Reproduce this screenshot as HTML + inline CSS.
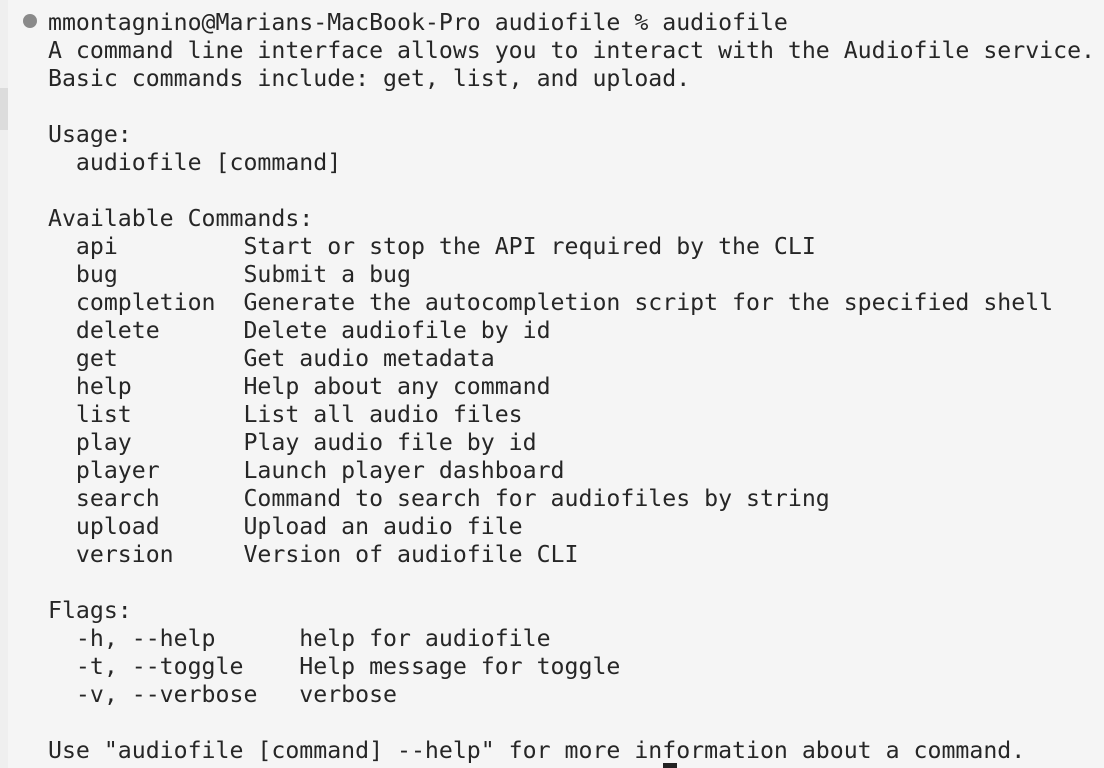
<!DOCTYPE html>
<html><head><meta charset="utf-8"><style>
html,body{margin:0;padding:0;background:#f5f5f5;width:1104px;height:768px;overflow:hidden;position:relative}
pre{position:absolute;left:48px;top:9px;margin:0;font-family:"DejaVu Sans Mono","Liberation Mono",monospace;font-size:23.2px;line-height:28px;color:#262626;white-space:pre}
.dot{position:absolute;left:23px;top:14px;width:14px;height:14px;border-radius:50%;background:#8a8a8a}
.bar{position:absolute;left:0;top:88px;width:8px;height:42px;background:#dcdcdc}
.edge{position:absolute;left:0;top:0;width:8px;height:768px;background:#efefef}
.cur{position:absolute;left:663px;top:763px;width:14px;height:10px;background:#222}
</style></head><body>
<div class="edge"></div><div class="bar"></div><div class="dot"></div>
<pre>mmontagnino@Marians-MacBook-Pro audiofile % audiofile
A command line interface allows you to interact with the Audiofile service.
Basic commands include: get, list, and upload.

Usage:
  audiofile [command]

Available Commands:
  api         Start or stop the API required by the CLI
  bug         Submit a bug
  completion  Generate the autocompletion script for the specified shell
  delete      Delete audiofile by id
  get         Get audio metadata
  help        Help about any command
  list        List all audio files
  play        Play audio file by id
  player      Launch player dashboard
  search      Command to search for audiofiles by string
  upload      Upload an audio file
  version     Version of audiofile CLI

Flags:
  -h, --help      help for audiofile
  -t, --toggle    Help message for toggle
  -v, --verbose   verbose

Use "audiofile [command] --help" for more information about a command.
mmontagnino@Marians-MacBook-Pro audiofile % </pre>
<div class="cur"></div>
</body></html>
